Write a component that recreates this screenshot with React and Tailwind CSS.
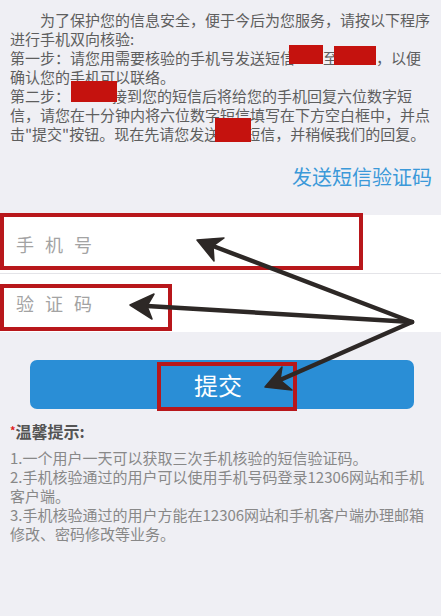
const Mask = ({ className }) => (
  <span className={`relative z-10 inline-block bg-[#c5120e] align-top ${className}`} />
);

const arrows = [
  { tip: [197, 240], b1: [224, 238], inner: [213, 246], b2: [214, 261] },
  { tip: [130, 305], b1: [154, 294], inner: [147, 306], b2: [152, 319] },
  { tip: [265, 387], b1: [282, 367], inner: [280, 380], b2: [292, 390] },
];

const Arrows = () => (
  <svg
    className="pointer-events-none absolute left-0 top-0 z-20"
    width="441"
    height="616"
    viewBox="0 0 441 616"
  >
    {arrows.map((a, i) => (
      <g key={i} fill="#2d2826" stroke="#2d2826">
        <line x1="412" y1="322" x2={a.inner[0]} y2={a.inner[1]} strokeWidth="4.5" strokeLinecap="round" />
        <path
          d={`M${a.tip[0]} ${a.tip[1]} L${a.b1[0]} ${a.b1[1]} L${a.inner[0]} ${a.inner[1]} L${a.b2[0]} ${a.b2[1]} Z`}
          strokeWidth="1.5"
          strokeLinejoin="round"
        />
      </g>
    ))}
  </svg>
);

const App = () => {
  return (
    <div className="relative h-[616px] w-[441px] overflow-hidden bg-[#efeff4] font-['Noto_Sans_CJK_SC',sans-serif]">
      <div className="whitespace-nowrap px-[10px] pt-[10px] text-[15px] leading-[19px] text-[#5e5e5e]">
        <div className="pl-[30px]">为了保护您的信息安全，便于今后为您服务，请按以下程序</div>
        <div>进行手机双向核验:</div>
        <div>
          第一步：请您用需要核验的手机号发送短信
          <Mask className="ml-[-6px] h-[19px] w-[34px] -translate-y-[3px]" />
          至
          <Mask className="ml-[-4px] h-[19px] w-[42px] -translate-y-[2px]" />
          ，以便
        </div>
        <div>确认您的手机可以联络。</div>
        <div>
          第二步：
          <Mask className="mr-[-5px] ml-[1px] mb-[-2px] h-[21px] w-[46px] -translate-y-[5px]" />
          接到您的短信后将给您的手机回复六位数字短
        </div>
        <div>信，请您在十分钟内将六位数字短信填写在下方空白框中，并点</div>
        <div>
          击"提交"按钮。现在先请您发送
          <Mask className="ml-[-4px] mr-[-6px] mb-[-5px] h-[24px] w-[36px] -translate-y-[6px]" />
          短信，并稍候我们的回复。
        </div>
      </div>

      <div className="mt-[20px] pr-[9px] text-right text-[20px] leading-[28px] text-[#3b99d9]">
        发送短信验证码
      </div>

      <div className="mt-[24px] bg-white">
        <div className="relative flex h-[59px] items-center border-b border-[#e4e4e8] pl-[16px] pt-[1px] text-[18px] tracking-[11px] text-[#a3a3a3]">
          手机号
          <div className="absolute left-0 top-[-2px] h-[57px] w-[363px] border-4 border-[#b8171b]" />
        </div>
        <div className="relative flex h-[58px] items-center pl-[16px] pt-[1px] text-[18px] tracking-[11px] text-[#a3a3a3]">
          验证码
          <div className="absolute left-0 top-[10px] h-[47px] w-[172px] border-4 border-[#b8171b]" />
        </div>
      </div>

      <div className="relative ml-[30px] mt-[28px] flex h-[49px] w-[384px] items-center justify-center rounded-[7px] bg-[#2a8ed6] text-[24px] text-white">
        <span className="ml-[-8px]">提交</span>
        <div className="absolute left-[127px] top-[2px] h-[49px] w-[140px] border-4 border-[#b8171b]" />
      </div>

      <div className="mt-[12px] px-[10px] text-[16px] font-bold leading-[20px] text-[#555555]">
        <span className="relative -top-[3px] text-[11px] text-[#e0201b]">*</span>温馨提示:
      </div>

      <div className="mt-[5px] whitespace-nowrap px-[10px] text-[15px] leading-[19px] text-[#888888]">
        <div>1.一个用户一天可以获取三次手机核验的短信验证码。</div>
        <div>2.手机核验通过的用户可以使用手机号码登录12306网站和手机</div>
        <div>客户端。</div>
        <div>3.手机核验通过的用户方能在12306网站和手机客户端办理邮箱</div>
        <div>修改、密码修改等业务。</div>
      </div>

      <Arrows />
    </div>
  );
};

export default App;
